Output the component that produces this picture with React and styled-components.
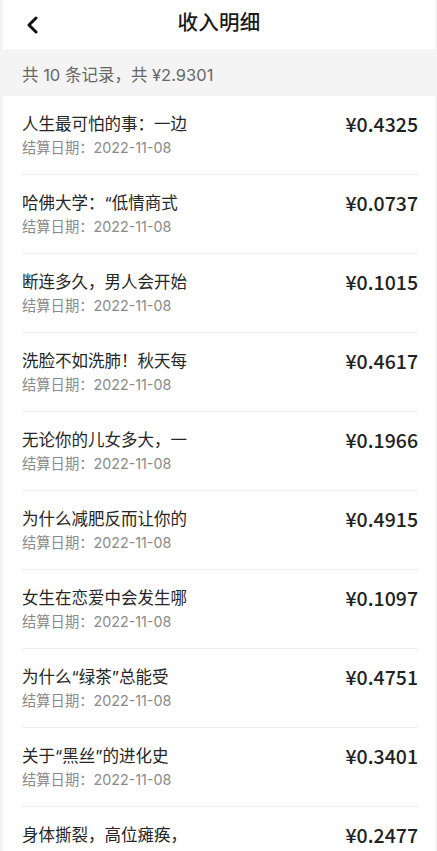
import React from "react";
import styled, { createGlobalStyle } from "styled-components";

const Global = createGlobalStyle`
  html, body { margin: 0; padding: 0; background: #f4f4f4; }
  body { font-family: Inter, "Noto Sans CJK SC", "Noto Sans", sans-serif; -webkit-font-smoothing: antialiased; }
  * { box-sizing: border-box; }
`;

const Page = styled.div`
  margin: 0 2px 0 3px;
  background: #fff;
  min-height: 851px;
`;

const Header = styled.header`
  height: 49px;
  display: grid;
  grid-template-columns: 60px 1fr 60px;
  align-items: center;
`;

const Back = styled.button`
  border: 0;
  background: none;
  padding: 0 0 0 22px;
  height: 49px;
  display: flex;
  align-items: center;
  cursor: pointer;
`;

const Title = styled.h1`
  margin: 0;
  text-align: center;
  font-size: 20.5px;
  font-weight: 500;
  color: #1a1a1a;
  line-height: 42px;
  padding-bottom: 4px;
  letter-spacing: 0.3px;
`;

const Summary = styled.div`
  height: 47px;
  background: #f4f4f4;
  display: flex;
  align-items: center;
  padding: 2px 19px 0;
  font-size: 16.5px;
  color: #666;
`;

const List = styled.ul`
  list-style: none;
  margin: 0;
  padding: 0 17px 0 19px;
`;

const Row = styled.li`
  display: flex;
  justify-content: space-between;
  align-items: flex-start;
  padding: 16px 0 16px;
  border-bottom: 1px solid #efefef;
`;

const Info = styled.div`
  display: flex;
  flex-direction: column;
  gap: 2px;
`;

const ItemTitle = styled.div`
  font-size: 16.5px;
  line-height: 24px;
  color: #262626;
`;

const DateText = styled.div`
  font-size: 14.3px;
  line-height: 20px;
  color: #8a8a8a;
`;

const Amount = styled.div`
  font-family: "Noto Sans CJK SC", sans-serif;
  font-size: 19.5px;
  line-height: 24px;
  font-weight: 500;
  color: #222;
  font-variant-numeric: tabular-nums;
`;

const items = [
  ["人生最可怕的事：一边", "0.4325"],
  ["哈佛大学：“低情商式", "0.0737"],
  ["断连多久，男人会开始", "0.1015"],
  ["洗脸不如洗肺！秋天每", "0.4617"],
  ["无论你的儿女多大，一", "0.1966"],
  ["为什么减肥反而让你的", "0.4915"],
  ["女生在恋爱中会发生哪", "0.1097"],
  ["为什么“绿茶”总能受", "0.4751"],
  ["关于“黑丝”的进化史", "0.3401"],
  ["身体撕裂，高位瘫痪，", "0.2477"],
];

export default function App() {
  return (
    <>
      <Global />
      <Page>
        <Header>
          <Back aria-label="返回">
            <svg width="14" height="18" viewBox="0 0 14 18">
              <path d="M11 2 L4 9 L11 16" fill="none" stroke="#111" strokeWidth="3" strokeLinecap="round" strokeLinejoin="round" />
            </svg>
          </Back>
          <Title>收入明细</Title>
          <span />
        </Header>
        <Summary>共 10 条记录，共 ¥2.9301</Summary>
        <List>
          {items.map(([t, a]) => (
            <Row key={a}>
              <Info>
                <ItemTitle>{t}</ItemTitle>
                <DateText>结算日期：2022-11-08</DateText>
              </Info>
              <Amount>¥{a}</Amount>
            </Row>
          ))}
        </List>
      </Page>
    </>
  );
}
